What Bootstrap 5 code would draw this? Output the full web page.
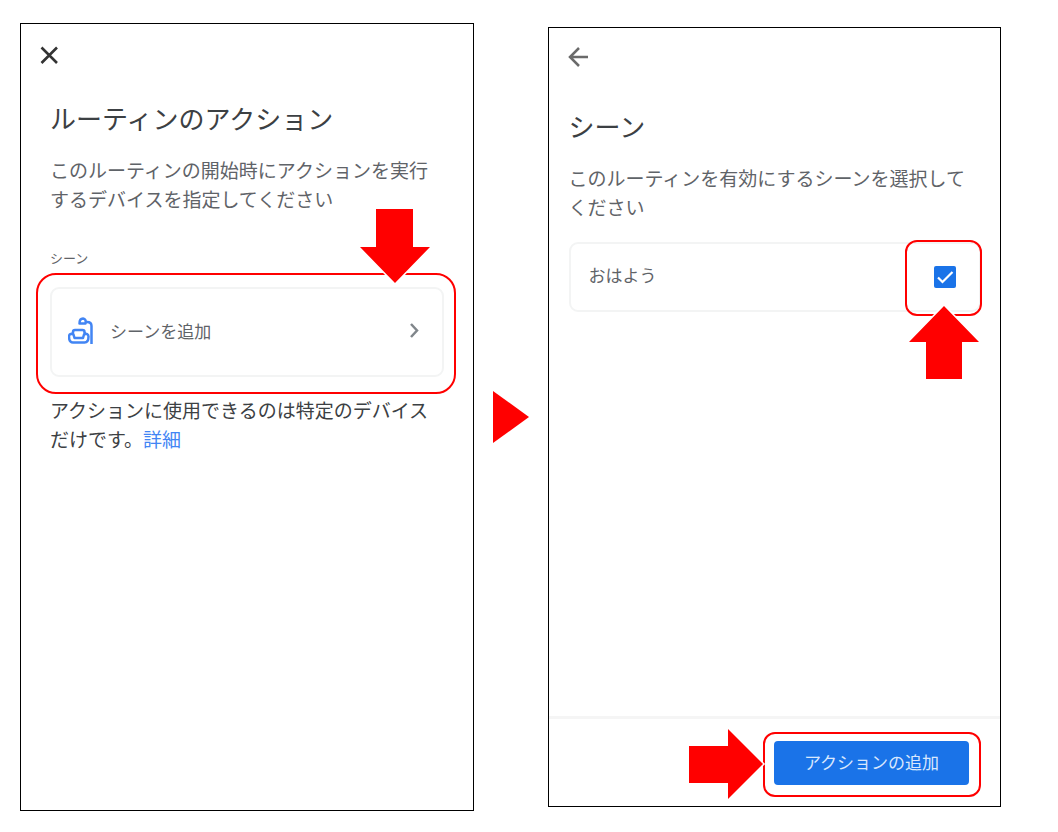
<!DOCTYPE html>
<html lang="ja">
<head>
<meta charset="utf-8">
<meta name="viewport" content="width=device-width, initial-scale=1">
<title>ルーティンのアクション</title>
<link href="https://cdn.jsdelivr.net/npm/bootstrap@5.3.0/dist/css/bootstrap.min.css" rel="stylesheet">
<style>
  body { font-family: "Noto Sans CJK JP", sans-serif; font-size: 19px; line-height: 29px; color: #5f6368; background: #fff; }
  .guide { grid-template-columns: minmax(0, 1fr) 74px minmax(0, 1fr); padding: 23px 57px 21px 20px; }
  .phone { border: 1px solid #000; }
  .phone-start { padding: 19px 29px; }
  .phone-pick { margin: 4px 0; }
  .pick-body { padding: 17px 19px 17px 20px; }
  .icon-btn { width: 24px; height: 24px; }
  .icon-btn.close-x { margin-left: -13px; color: #333; }
  .icon-btn.go-back { margin-left: -3px; color: #6a6a6a; }
  h1, h2 { font-size: 26px; line-height: 36px; font-weight: 400; color: #3c4043; margin: 0 0 19px; }
  .phone-start h1 { margin-top: 33px; }
  .phone-pick h2 { margin-top: 39px; }
  .group-label { font-size: 13px; line-height: 20px; margin: 35px 0 19px; }
  .tile { border: 2px solid #f3f4f4; border-radius: 9px; background: #fff; font-size: 17px; line-height: 25px; color: #5f6368; }
  .tile-add { height: 90px; padding: 0 20px 4px 16px; gap: 16px; }
  .scene-item { margin-top: 21px; }
  .tile-scene { height: 70px; padding: 0 23px 0 18px; }
  .tile-scene span { padding-bottom: 6px; }
  .tile-scene .form-check-input { width: 22px; height: 22px; margin: 0; border: 0; border-radius: 2px; }
  .tile-scene .form-check-input:checked { background-color: #1a73e8; background-image: url("data:image/svg+xml,%3csvg xmlns='http://www.w3.org/2000/svg' viewBox='0 0 22 22'%3e%3cpath fill='none' stroke='%23fff' stroke-width='2.2' d='M4 11.5 8.5 16 18.500 6'/%3e%3c/svg%3e"); }
  .note { color: #3c4043; margin: 18px 0 0; }
  .note a { color: #4285f4; }
  .foot { border-top: 3px solid #f5f5f5; padding: 22px 31px 21px; }
  .btn-action { background: #1a73e8; color: #d9e7fd; font-size: 17px; line-height: 25px; width: 195px; height: 44px; padding: 0 0 3px; border: 0; border-radius: 4px; }
  .btn-action:hover { background: #1765cc; color: #fff; }
  .ring { position: absolute; border: 2px solid #f00; pointer-events: none; }
  .ring-tile { inset: -14px -12px -17px -14px; border-radius: 20px; }
  .ring-check { top: -2px; right: -1px; width: 77px; height: 76px; border-radius: 12px; }
  .ring-action { inset: -9px -12px -12px -11px; border-radius: 12px; }
  .pointer { position: absolute; fill: #f00; stroke: #fff; stroke-width: 3; paint-order: stroke; overflow: visible; pointer-events: none; }
  .pointer-down { right: 14px; bottom: 94px; }
  .pointer-up { right: 2px; top: 64px; }
  .pointer-right { right: 206px; top: -12px; }
</style>
</head>
<body>
<main class="guide d-grid min-vh-100">
  <section class="phone phone-start">
    <button type="button" class="icon-btn close-x btn p-0 border-0 d-block" aria-label="閉じる">
      <svg class="d-block" width="24" height="24" viewBox="0 0 24 24" fill="none" stroke="currentColor" stroke-width="2.6"><path d="M4.500 4.500 20 20M20 4.500 4.500 20"/></svg>
    </button>
    <h1>ルーティンのアクション</h1>
    <p class="mb-0">このルーティンの開始時にアクションを実行するデバイスを指定してください</p>
    <p class="group-label">シーン</p>
    <div class="position-relative">
      <button type="button" class="tile tile-add d-flex align-items-center w-100 text-start">
        <svg width="26" height="28" viewBox="0 0 26 28" fill="none" stroke="#4285f4" stroke-width="2.500" stroke-linejoin="round"><path d="M23.500 28V10Q23.500 6 19 6H17M11.500 7.500Q11.500 2.500 15 2.500Q18.500 3 17.500 7.500ZM5 18V16Q5 14 7 14H14.500Q16.500 14 16.500 16V18M5.500 18.500C3 17 1 18.500 1 20.500C1 24 2.500 26.500 5 26.500H16.500C19 26.500 20.500 24 20.500 20.500C20.500 18.500 18.500 17 16 18.500L15 22H6.500Z"/></svg>
        <span class="flex-grow-1">シーンを追加</span>
        <svg width="14" height="16" viewBox="0 0 14 16" fill="none" stroke="#80868b" stroke-width="2.500"><path d="M3 2 9 8.500 3 15"/></svg>
      </button>
      <div class="ring ring-tile"></div>
      <svg class="pointer pointer-down" width="70" height="74" viewBox="0 0 70 74" aria-hidden="true"><path d="M16 0H53V38H70L35 74 0 38H16Z"/></svg>
    </div>
    <p class="note">アクションに使用できるのは特定のデバイスだけです。<a href="#" class="text-decoration-none">詳細</a></p>
  </section>

  <div class="d-flex align-items-center justify-content-center">
    <svg width="36" height="52" viewBox="0 0 36 52" fill="#f00" aria-hidden="true"><path d="M0 0 36 26 0 52Z"/></svg>
  </div>

  <section class="phone phone-pick d-flex flex-column">
    <div class="pick-body flex-grow-1">
      <button type="button" class="icon-btn go-back btn p-0 border-0 d-block" aria-label="戻る">
        <svg class="d-block" width="24" height="24" viewBox="0 0 24 24" fill="none" stroke="currentColor" stroke-width="2.500"><path d="M22 12H4M13 3 4 12 13 21"/></svg>
      </button>
      <h2>シーン</h2>
      <p class="mb-0">このルーティンを有効にするシーンを選択してください</p>
      <div class="scene-item position-relative">
        <label class="tile tile-scene d-flex align-items-center justify-content-between" for="scene-morning">
          <span>おはよう</span>
          <input class="form-check-input" type="checkbox" id="scene-morning" checked>
        </label>
        <div class="ring ring-check"></div>
        <svg class="pointer pointer-up" width="70" height="74" viewBox="0 0 70 74" aria-hidden="true"><path d="M17 73H53V36H70L35 0 0 36H17Z"/></svg>
      </div>
    </div>
    <footer class="foot d-flex justify-content-end">
      <div class="position-relative">
        <button type="button" class="btn btn-action">アクションの追加</button>
        <div class="ring ring-action"></div>
        <svg class="pointer pointer-right" width="74" height="70" viewBox="0 0 74 70" aria-hidden="true"><path d="M0 17H39V0L74 35 39 70V54H0Z"/></svg>
      </div>
    </footer>
  </section>
</main>
<script src="https://cdn.jsdelivr.net/npm/bootstrap@5.3.0/dist/js/bootstrap.bundle.min.js"></script>
</body>
</html>
